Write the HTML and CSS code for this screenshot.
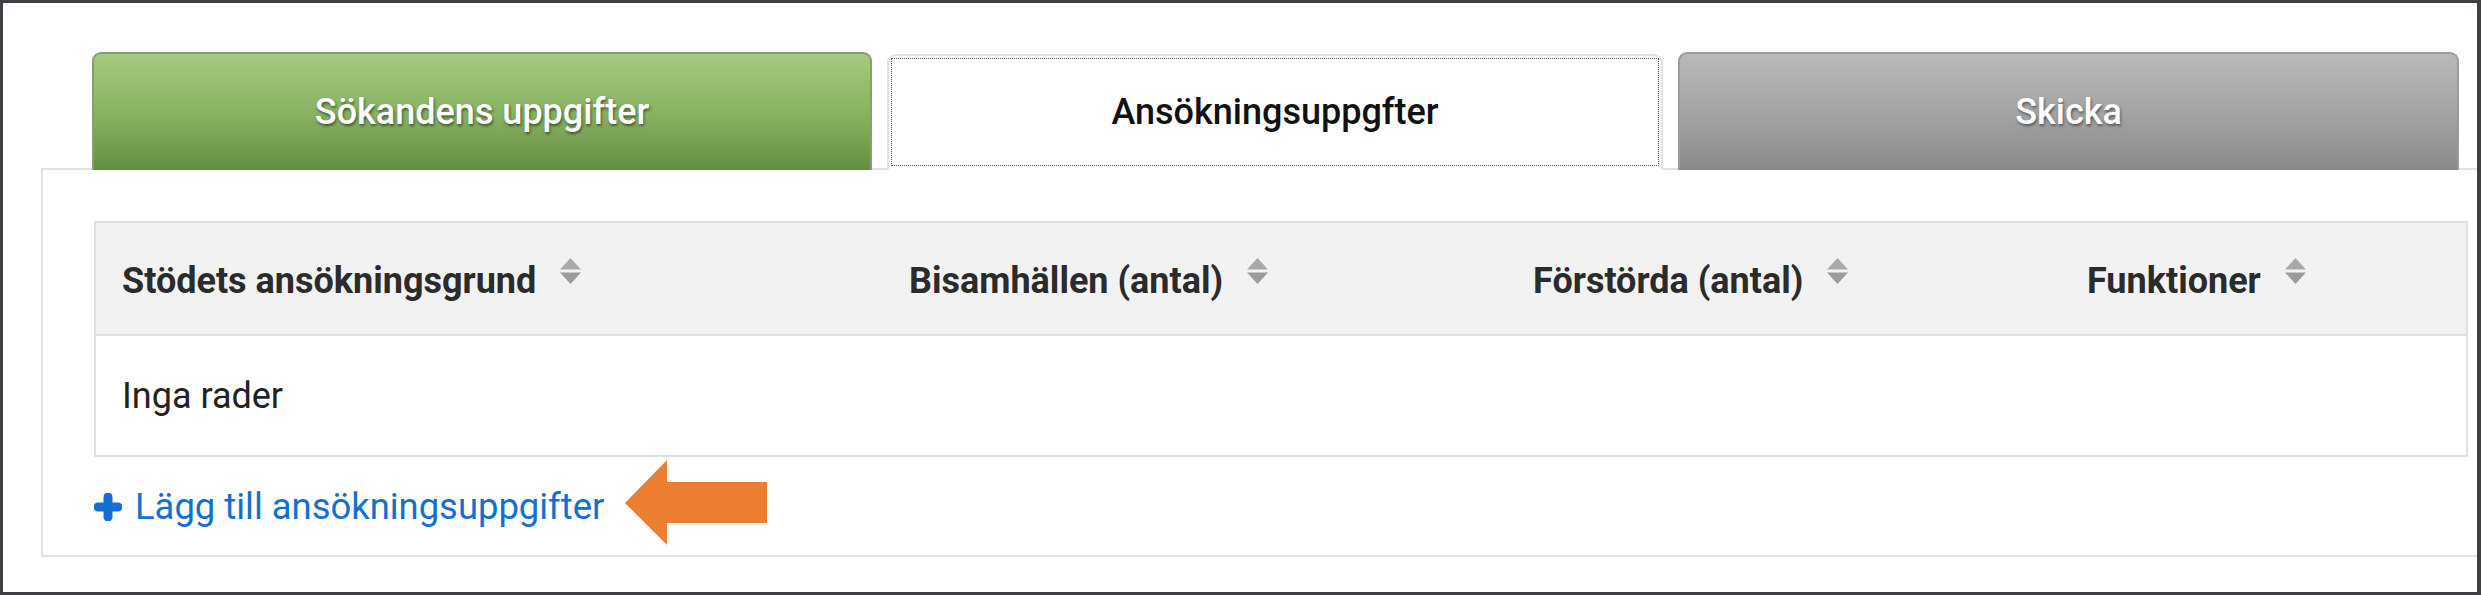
FILE: index.html
```html
<!DOCTYPE html>
<html lang="sv">
<head>
<meta charset="utf-8">
<title>Ansökningsuppgifter</title>
<link rel="stylesheet" href="styles.css">
</head>
<body>
<div class="frame">
  <div class="tabs">
    <div class="tab tab-done">Sökandens uppgifter</div>
    <div class="tab tab-active"><span class="focus">Ansökningsuppgfter</span></div>
    <div class="tab tab-next">Skicka</div>
  </div>
  <div class="panel">
    <div class="table">
      <div class="thead">
        <div class="th">Stödets ansökningsgrund<svg class="sort" viewBox="0 0 21 26"><path d="M10.5 0 L21 11.5 L0 11.5 Z" fill="#a9a9a9"/><path d="M0 14.5 L21 14.5 L10.5 26 Z" fill="#9b9b9b"/></svg></div>
        <div class="th">Bisamhällen (antal)<svg class="sort" viewBox="0 0 21 26"><path d="M10.5 0 L21 11.5 L0 11.5 Z" fill="#a9a9a9"/><path d="M0 14.5 L21 14.5 L10.5 26 Z" fill="#9b9b9b"/></svg></div>
        <div class="th">Förstörda (antal)<svg class="sort" viewBox="0 0 21 26"><path d="M10.5 0 L21 11.5 L0 11.5 Z" fill="#a9a9a9"/><path d="M0 14.5 L21 14.5 L10.5 26 Z" fill="#9b9b9b"/></svg></div>
        <div class="th">Funktioner<svg class="sort" viewBox="0 0 21 26"><path d="M10.5 0 L21 11.5 L0 11.5 Z" fill="#a9a9a9"/><path d="M0 14.5 L21 14.5 L10.5 26 Z" fill="#9b9b9b"/></svg></div>
      </div>
      <div class="row">Inga rader</div>
    </div>
    <div class="add">
      <a class="add-link" href="#"><svg class="plus" viewBox="0 0 28 28"><path d="M14 4 V24 M4 14 H24" stroke="#1470d0" stroke-width="9" stroke-linecap="round"/></svg>Lägg till ansökningsuppgifter</a>
      <svg class="arrow" viewBox="0 0 142 85"><path d="M0 43 L42 0 L42 22 L142 22 L142 63 L42 63 L42 85 Z" fill="#ed7d31"/></svg>
    </div>
  </div>
</div>
</body>
</html>
```
FILE: styles.css
```css
html, body {
  margin: 0;
  padding: 0;
  background: #ffffff;
}
body {
  font-family: Roboto, "Liberation Sans", Arial, sans-serif;
}
.frame {
  width: 2481px;
  height: 595px;
  box-sizing: border-box;
  border-style: solid;
  border-color: #3d4045;
  border-width: 3px 4px 3px 3px;
  background: #ffffff;
  overflow: hidden;
}
.tabs {
  display: grid;
  grid-template-columns: 780px 776px 781px;
  column-gap: 15px;
  margin-top: 49px;
  padding-left: 89px;
  height: 116px;
  position: relative;
  z-index: 1;
}
.tab {
  box-sizing: border-box;
  display: flex;
  align-items: center;
  justify-content: center;
  font-size: 36px;
  font-weight: 500;
  border-radius: 9px 9px 0 0;
}
.tab-done {
  color: #ffffff;
  background: linear-gradient(to bottom, #a6ca7e 0%, #86b060 55%, #648e3f 100%);
  border: 2px solid #8a9a7c;
  border-bottom: none;
  text-shadow: 1px 2px 3px rgba(0, 0, 0, 0.5);
}
.tab-next {
  color: #ffffff;
  background: linear-gradient(to bottom, #b9b9b9 0%, #a2a2a2 55%, #888888 100%);
  border: 2px solid #9a9a9a;
  border-bottom: none;
  text-shadow: 1px 2px 3px rgba(0, 0, 0, 0.45);
}
.tab-active {
  color: #111111;
  background: #ffffff;
  border: 2px solid #e2e2e2;
  border-bottom: none;
  margin-top: 2px;
  height: 116px;
  padding: 2px 2px 4px 2px;
}
.focus {
  flex: 1;
  align-self: stretch;
  display: flex;
  align-items: center;
  justify-content: center;
  border: 1px dotted #555555;
}
.panel {
  box-sizing: border-box;
  margin-left: 38px;
  margin-right: -4px;
  border: 2px solid #e3e3e3;
  height: 389px;
  padding: 51px 11px 10px 51px;
}
.table {
  border: 2px solid #e0e0e0;
}
.thead {
  display: grid;
  grid-template-columns: 787px 624px 554px 1fr;
  height: 111px;
  background: #f2f2f2;
  border-bottom: 2px solid #e0e0e0;
}
.th {
  display: flex;
  align-items: center;
  padding-left: 26px;
  padding-top: 4px;
  font-size: 36px;
  font-weight: 700;
  color: #2b2b2b;
}
.sort {
  width: 21px;
  height: 26px;
  margin-left: 24px;
  margin-bottom: 20px;
  flex: none;
}
.row {
  height: 119px;
  display: flex;
  align-items: center;
  padding-left: 26px;
  font-size: 36px;
  color: #222222;
}
.add {
  display: flex;
  align-items: center;
  height: 85px;
  margin-top: 3px;
}
.add-link {
  display: flex;
  align-items: center;
  color: #1470d0;
  text-decoration: none;
  font-size: 36.4px;
  padding-top: 8px;
}
.plus {
  width: 28px;
  height: 28px;
  margin-right: 13px;
  flex: none;
}
.arrow {
  width: 142px;
  height: 85px;
  margin-left: 21px;
  flex: none;
}
```
